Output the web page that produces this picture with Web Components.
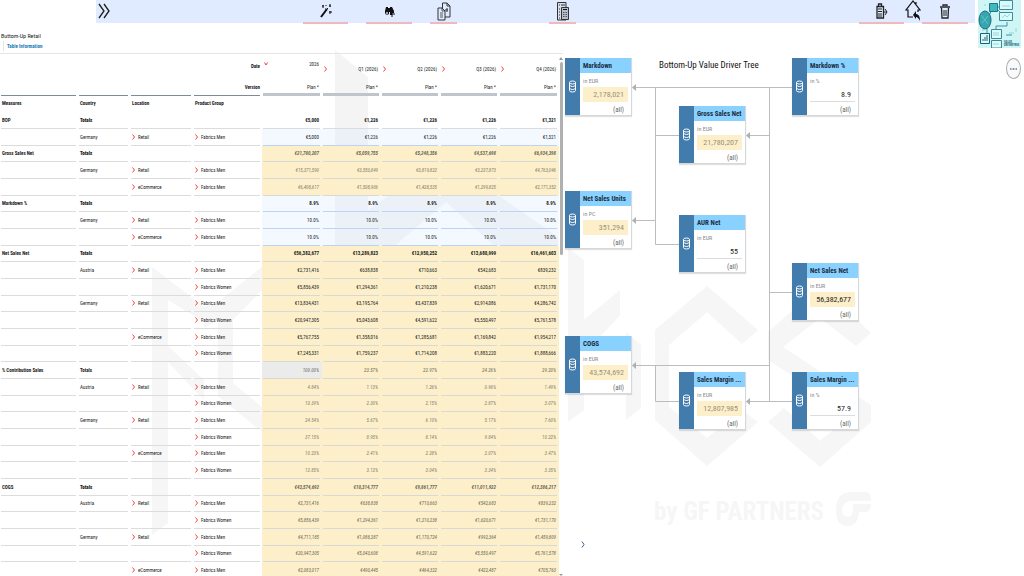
<!DOCTYPE html>
<html lang="en">
<head>
<meta charset="utf-8">
<title>Bottom-Up Value Driver Tree</title>
<style>
html,body{margin:0;height:100%}
body{font-family:"Roboto Condensed","Open Sans Condensed","Liberation Sans",sans-serif;color:#222;background:#fff;overflow:hidden}
</style>
</head>
<body>
<planning-app></planning-app>
<script>
function define(name, html, setup) {
  const t = document.createElement('template');
  t.innerHTML = html;
  customElements.define(name, class extends HTMLElement {
    constructor() {
      super();
      this.attachShadow({mode: 'open'}).append(t.content.cloneNode(true));
    }
    connectedCallback() { if (setup) setup(this, this.shadowRoot); }
  });
}

/* Faint brand artwork behind the page */
define('brand-backdrop', `
<style>
:host{display:block;position:absolute;inset:0;z-index:-1;overflow:hidden}
svg{display:block}
text{font-weight:700;font-size:25px}
</style>
<svg width="1024" height="576" viewBox="0 0 1024 576" fill="#f6f6f6" aria-hidden="true">
<path d="M152 267L204 307V400L168 362V523L152 535ZM168 300V346L204 380V322Z" fill-rule="evenodd"/>
<path d="M204 307L218 302L262 267V290L233 320V383L262 407V432L218 396V320L204 328Z"/>
<path d="M335 50L368 77V210L390 195H498L558 237V260H510L446 202L384 255H335Z" fill="#f4f4f4"/>
<path d="M568 248L584 260V320L620 290V315L597 340L584 350V410L568 422ZM626 332L641 345V408L626 420Z"/>
<path d="M707 286L758 330L742 344L707 312L669 345V407L707 438L742 410L758 422L707 466L655 420V330Z"/>
<path d="M820 286L871 333L856 346L820 318L783 347L871 405V422L820 467L768 422L784 408L820 441L852 414L768 360V332Z"/>
<text x="654" y="520">by GF PARTNERS</text>
<path d="M852 492H866Q871 492 871 501H853Q842 501 842 510Q842 517 847 517Q853 517 853 510V504H871Q871 512 865 512H859Q858 526 847 526Q836 526 836 510Q836 492 852 492Z"/>
</svg>`);

define('tool-button', `
<style>
:host{display:block;flex:none;height:24px}
button{display:flex;align-items:center;justify-content:center;box-sizing:border-box;width:100%;height:24px;margin:0;padding:0;border:0;border-bottom:2px solid transparent;background:none;color:#1c1c1c}
:host([marked]) button{border-bottom-color:#f1b9bf}
</style>
<button type="button"><slot></slot></button>`, (el, root) => {
  root.querySelector('button').setAttribute('aria-label', el.getAttribute('label'));
});

define('app-toolbar', `
<style>
:host{display:flex;height:48px;padding-left:96px;margin-bottom:-25px}
nav{flex:1;display:flex;height:23px;padding-right:7px;box-sizing:border-box;background:#e0ebff}
i{flex:1 1 0}
.a{flex-grow:191}.b{flex-grow:92}.c{flex-grow:283}
.w{width:45px}.x{width:46px}.n{width:27px}.s{width:16px}
.gap{margin-right:18px}.tight{margin-right:1px}
.thumb{flex:none;width:43px;margin:0 3px}
svg{display:block}
.thumb text{font-weight:700;font-size:3px}
</style>
<nav aria-label="Actions">
<tool-button class="s" label="Expand"><svg width="12" height="16" viewBox="0 0 12 16" fill="none" stroke="#1c1c1c" stroke-width="1.300"><path d="M1 1L6 8L1 15M6 1L11 8L6 15"/></svg></tool-button>
<i class="a"></i>
<tool-button class="w gap" label="Wizard" marked><svg width="12" height="14" viewBox="0 0 12 14"><path d="M1 13L7 5" stroke="#111" stroke-width="2"/><path d="M7 4L8 5M3 1V4M2 2H4M10 0V3M9 2H11M10 7V10M9 8H12M6 1V2M5 5H6" stroke="#111"/></svg></tool-button>
<tool-button class="x gap" label="Search" marked><svg width="11" height="11" viewBox="0 0 11 11"><path d="M2 1H4V2H6V1H8L10 5V7H8V9H6V6H5V8Q2 10 1 7V5Z" fill="#111"/><circle cx="3" cy="7" r="1" fill="#cfd8ec"/><path d="M8 6V11M6 8H11" stroke="#111"/></svg></tool-button>
<tool-button class="n" label="Copy version" marked><svg width="14" height="19" viewBox="0 0 14 19" fill="#e0ebff" stroke="#333"><path d="M5.500 1H10L13 4V15H5.500Z"/><path d="M10 1V4H13M8 8H11M10 6V10" fill="none"/><path d="M1 6H5L8 9V18H1Z"/><path d="M5 6V9H8M3 11H6M3 13H6M3 15H6" fill="none" stroke-width=".8"/></svg></tool-button>
<i class="b"></i>
<tool-button class="n" label="Calculate" marked><svg width="14" height="19" viewBox="0 0 14 19" fill="none" stroke="#333"><path d="M1.500 .5H10V18H1.500Z" fill="#d7deea"/><path d="M3 3H4M5 3H9M3 7H4M3 10H4M3 13H4M3 16H4" /><path d="M5.500 5.500H12.500V17.500H5.500Z" fill="#b7bdca"/><path d="M7 7.500H11" stroke="#111"/><path d="M7 10.500H11M7 12.500H11M7 14.500H11" stroke="#555" stroke-dasharray="1 .5"/></svg></tool-button>
<i class="c"></i>
<tool-button class="w tight" label="Export" marked><svg width="12" height="16" viewBox="0 0 12 16" fill="none" stroke="#222"><path d="M2.500 3V1H5.500V3M1 3.500H7.500V15H1Z" stroke-width="1.300"/><path d="M2 6H6M2 8.500H6M2 11H6M2 13H6" /><path d="M7 9H11M9 6L11 9L9 12"/></svg></tool-button>
<tool-button class="s tight" label="Home"><svg width="16" height="22" viewBox="0 0 16 22" fill="none" stroke="#111" stroke-width="1.200"><path d="M8 17H3V10H1L8 1L15 10H13V12M11 2V4"/><path d="M8 15L11 11V14Q15 14 15 21Q13 17 11 17V19Z" fill="#111" stroke="none"/></svg></tool-button>
<tool-button class="x" label="Delete" marked><svg width="10" height="15" viewBox="0 0 10 15" fill="none" stroke="#222"><path d="M0 3H10" stroke-width="1.500"/><path d="M3 2V1H7V2M1.500 4L2 14H8L8.500 4" stroke-width="1.300"/><path d="M4 6V12M6 6V12"/></svg></tool-button>
</nav>
<div class="thumb">
<svg width="43" height="48" viewBox="0 0 43 48">
<path d="M0 0H43V48H0Z" fill="#cff5f5"/>
<path d="M6 5H8M31 33H36M4 30H6M38 28V32" stroke="#8fd6dc"/>
<g fill="none" stroke="#3a93a2"><path d="M12 14L14 8M20 7H22M20 10L24 14M29 22V26H18V30M28 35H34M9 28V33"/></g>
<ellipse cx="7" cy="20" rx="6" ry="9" fill="#36a5ae" stroke="#1e6a80"/>
<path d="M3 15L10 24M4 23L10 16" stroke="#5fc6ca"/>
<path d="M11.500 3.500H19.500V11.500H11.500Z" fill="#3fb8bc" stroke="#23758a"/>
<g fill="#d9fbf9" stroke="#3c8a9c"><path d="M21.500 .5H34.500V9.500H21.500ZM21.500 12.500H34.500V20.500H21.500ZM13.500 29.500H23.500V38.500H13.500ZM13.500 40.500H23.500V48H13.500Z"/><path d="M2.500 33.500H11.500V43.500H2.500Z" stroke="#1e5f78"/></g>
<path d="M24 6H32M24 18L27 15L29 17L32 14M15 33H21M15 35H21M15 44H21" stroke="#9bd5da" fill="none"/>
<path d="M5 41V39M7 41V37M9 41V35" stroke="#1e5f78"/>
<text x="26" y="43" fill="#1e6a80">VALUE</text><text x="26" y="46" fill="#1e6a80">DRIVERTREE</text>
</svg>
</div>`);

const F = ['Fabrics Men', 'Fabrics Women'];
/* measure, country, location, product group, row style, values */
const ROWS = [
 ['BOP','Totals','','','plain bold','€5,000 €1,226 €1,226 €1,226 €1,321'],
 ['','Germany','Retail',F[0],'blue','€5,000 €1,226 €1,226 €1,226 €1,321'],
 ['Gross Sales Net','Totals','','','calc bold','€21,780,207 €5,059,755 €5,248,356 €4,537,698 €6,934,398'],
 ['','Germany','Retail',F[0],'calc','€15,371,590 €3,550,849 €3,819,822 €3,237,873 €4,763,046'],
 ['','','eCommerce',F[0],'calc','€6,408,617 €1,508,906 €1,428,535 €1,299,825 €2,171,352'],
 ['Markdown %','Totals','','','blue bold','8.9% 8.9% 8.9% 8.9% 8.9%'],
 ['','Germany','Retail',F[0],'blue','10.0% 10.0% 10.0% 10.0% 10.0%'],
 ['','','eCommerce',F[0],'blue','10.0% 10.0% 10.0% 10.0% 10.0%'],
 ['Net Sales Net','Totals','','','open bold','€56,382,677 €13,289,823 €12,950,252 €13,680,999 €16,461,603'],
 ['','Austria','Retail',F[0],'open','€2,731,416 €638,838 €710,663 €542,683 €839,232'],
 ['','','',F[1],'open','€5,856,439 €1,294,361 €1,210,238 €1,620,671 €1,731,170'],
 ['','Germany','Retail',F[0],'open','€13,834,431 €3,195,764 €3,437,839 €2,914,086 €4,286,742'],
 ['','','',F[1],'open','€20,947,305 €5,043,608 €4,591,622 €5,550,497 €5,761,578'],
 ['','','eCommerce',F[0],'open','€5,767,755 €1,358,016 €1,285,681 €1,169,842 €1,954,217'],
 ['','','',F[1],'open','€7,245,331 €1,759,237 €1,714,208 €1,883,220 €1,888,666'],
 ['% Contribution Sales','Totals','','','calc dark share','100.00% 23.57% 22.97% 24.26% 29.20%'],
 ['','Austria','Retail',F[0],'calc','4.84% 1.13% 1.26% 0.96% 1.49%'],
 ['','','',F[1],'calc','10.39% 2.30% 2.15% 2.87% 3.07%'],
 ['','Germany','Retail',F[0],'calc','24.54% 5.67% 6.10% 5.17% 7.60%'],
 ['','','',F[1],'calc','37.15% 8.95% 8.14% 9.84% 10.22%'],
 ['','','eCommerce',F[0],'calc','10.23% 2.41% 2.28% 2.07% 3.47%'],
 ['','','',F[1],'calc','12.85% 3.12% 3.04% 3.34% 3.35%'],
 ['COGS','Totals','','','calc bold','€43,574,692 €10,314,777 €9,861,777 €11,011,922 €12,386,217'],
 ['','Austria','Retail',F[0],'calc dark','€2,731,416 €638,838 €710,663 €542,683 €839,232'],
 ['','','',F[1],'calc dark','€5,856,439 €1,294,361 €1,210,238 €1,620,671 €1,731,170'],
 ['','Germany','Retail',F[0],'calc dark','€4,711,185 €1,088,287 €1,170,724 €992,364 €1,459,809'],
 ['','','',F[1],'calc dark','€20,947,305 €5,043,608 €4,591,622 €5,550,497 €5,761,578'],
 ['','','eCommerce',F[0],'calc dark','€2,083,017 €490,445 €464,322 €422,487 €705,763']
];
const CHEV = '<svg class="chev" width="3" height="6" viewBox="0 0 3 6" aria-hidden="true"><path d="M.5 .5L2.500 3L.5 5.500" fill="none" stroke="#f5403f"/></svg>';
const DOWN = '<svg class="chev" width="4" height="4" viewBox="0 0 4 4" aria-hidden="true"><path d="M.5 .5L2 3L3.500 .5" fill="none" stroke="#f5403f"/></svg>';

define('retail-table', `
<style>
:host{display:flex;flex-direction:column;min-width:0;overflow:hidden}
header{flex:none;height:22px;padding-top:8px;border-bottom:1px solid #e6e6e6}
h1{margin:0 1px;font-size:6px;line-height:10px;font-weight:400;color:#222}
a{display:block;width:max-content;margin-left:3px;padding-left:3px;border-left:1px solid #e4e4e4;font-size:5px;line-height:10px;font-weight:700;color:#1a7db8;text-decoration:none}
.body{flex:1;display:flex;min-height:0;overflow:hidden}
.scroll{flex:1;min-width:0;overflow:hidden}
.bar{flex:none;display:flex;flex-direction:column;align-items:center;width:4px;padding-top:3px}
.bar b{width:0;border:2px solid transparent;border-top:0;border-bottom:3px solid #999}
.bar i{width:3px;height:193px;margin-top:2px;border-radius:2px;background:#b0b0b0}
.bar b.down{margin-top:auto;border-bottom:0;border-top:2px solid #999}
table{width:100%;table-layout:fixed;border-collapse:collapse;font-size:5px;line-height:8px;white-space:nowrap}
th,td{padding:0 2px;text-align:left;vertical-align:middle;font-weight:400;
 background:linear-gradient(var(--rule,#dcdcdc),var(--rule,#dcdcdc)) no-repeat 1px 100% / calc(100% - 3px) 1px}
.num{text-align:right;padding-right:3px}
.bold>*,.strong{font-weight:700;color:#222}
.h1 th,.h3 th{background:none}
.h1 th{position:relative}
.h1 th.num{padding-top:6px}
.h1 th.year{padding:0 3px 3px 2px}
.h1 th.num .chev{position:absolute;left:2px;top:12px}
.h1 th.year .chev{top:8px}
.h2 th{--rule:#7c8a9a}
.h2 th.num{background:linear-gradient(#bfc5cc,#bfc5cc) no-repeat 1px 100% / calc(100% - 3px) 3px}
.r{text-align:right}
.h1{height:23px}.h2{height:19px}.h3{height:16px}
tbody td,.h3 th{padding-bottom:2px}
tbody tr{height:17px}
tbody tr:nth-child(3n){height:16px}
tbody .chev{margin-right:3px}
.c{display:flex;align-items:center}
.blue .num{background-color:rgba(214,236,255,.3);--rule:#bcd3f7}
.open .num,.calc .num{background-color:#fcefc9;--rule:#d6d9d6}
.calc .num{font-style:italic;color:#858070}
.calc.bold .num,.dark .num{color:#6c6858}
.share .num:nth-child(5){background-color:#ebebeb}
</style>
<header><h1>Buttom-Up Retail</h1><a href="#info">Table Information</a></header>
<div class="body"><div class="scroll"><table>
<colgroup><col style="width:78px"><col style="width:52px"><col style="width:63px"><col style="width:69px"><col style="width:60px"><col style="width:59px"><col style="width:59px"><col style="width:59px"><col style="width:60px"></colgroup>
<thead></thead><tbody></tbody></table></div>
<div class="bar"><b></b><i></i><b class="down"></b></div></div>`, (el, root) => {
  const q = ['2026','Q1 (2026)','Q2 (2026)','Q3 (2026)','Q4 (2026)'];
  root.querySelector('thead').innerHTML =
    '<tr class="h1"><th></th><th></th><th></th><th class="r strong">Date</th>' + q.map((t, i) => `<th class="num${i ? '' : ' year'}">${i ? CHEV : DOWN}${t}</th>`).join('') + '</tr>' +
    '<tr class="h2"><th></th><th></th><th></th><th class="r strong">Version</th>' + q.map(() => '<th class="num">Plan *</th>').join('') + '</tr>' +
    '<tr class="h3 bold"><th>Measures</th><th>Country</th><th>Location</th><th>Product Group</th>' + q.map(() => '<th></th>').join('') + '</tr>';
  const member = t => t ? `<span class="c">${CHEV}${t}</span>` : '';
  root.querySelector('tbody').innerHTML = ROWS.map(r =>
    `<tr class="${r[4]}"><td class="strong">${r[0]}</td><td>${r[1] === 'Totals' ? '<b>Totals</b>' : r[1]}</td><td>${member(r[2])}</td><td>${member(r[3])}</td>` +
    r[5].split(' ').map(v => `<td class="num">${v}</td>`).join('') + '</tr>').join('');
});

define('tree-node', `
<style>
:host{position:absolute;display:flex;width:67px;height:58px;box-sizing:border-box;background:#fff;border:1px solid #d4d8db;border-width:0 1px 1px 0;box-shadow:0 1px 1px rgba(0,0,0,.12)}
.side{flex:none;width:15px;display:flex;align-items:center;justify-content:center;background:#427cac}
.main{flex:1;min-width:0;display:flex;flex-direction:column}
h3{margin:0;padding:1px 0 0 3px;height:14px;line-height:15px;font-size:7px;font-weight:700;background:#89d1ff;color:#1d2d3e;white-space:nowrap}
label{padding:4px 3px 2px;font-size:6px;line-height:8px;color:#8a8a8a}
input{box-sizing:border-box;width:auto;min-width:0;height:15px;margin:0 3px;padding:0 4px;border:0;border-bottom:1px solid #dcdcdc;border-radius:0;background:none;font:inherit;font-size:8px;line-height:14px;text-align:right;color:#222}
:host([fill]) input{background:#fcefc9;border-color:#fcefc9}
:host([muted]) input{color:#9a927a}
p{margin:0;padding:4px 7px 0 0;text-align:right;font-size:7px;line-height:8px;color:#666}
</style>
<div class="side"><svg width="9" height="13" viewBox="0 0 9 13" fill="none" stroke="#fff"><ellipse cx="4.500" cy="2.500" rx="3" ry="1.500"/><path d="M1.500 2.500V10.500Q1.500 12 4.500 12Q7.500 12 7.500 10.500V2.500M1.500 5Q2 6.500 4.500 6.500Q7 6.500 7.500 5M1.500 8Q2 9.500 4.500 9.500Q7 9.500 7.500 8"/></svg></div>
<div class="main"><h3><slot></slot></h3><label for="v"></label><input id="v" type="text"><p>(all)</p></div>`, (el, root) => {
  root.querySelector('label').textContent = 'in ' + el.getAttribute('unit');
  root.querySelector('input').setAttribute('value', el.getAttribute('value'));
});

define('driver-tree', `
<style>
:host{display:block;position:relative;min-width:0}
.wires{position:absolute;left:0;top:0}
h2{position:absolute;left:96px;top:35px;margin:0;font-size:9px;line-height:14px;font-weight:400;color:#111;white-space:nowrap}
.more{position:absolute;right:3px;top:35px;width:15px;height:21px;padding:0;border:1px solid #aaa;border-radius:50%;background:#fafafa;display:flex;align-items:center;justify-content:center}
.next{position:absolute;left:17px;top:517px;width:6px;height:9px;padding:0;border:0;background:none;display:flex;align-items:center;justify-content:center}
</style>
<svg class="wires" width="300" height="420" viewBox="0 0 300 420" fill="none" stroke="#bdbdbd" aria-hidden="true">
<path d="M70 64.500H229M92.500 64V221.500H116M92.500 112.500H116M70 197.500H92M206.500 64V378M184 112.500H206M206 269.500H229M70 342.500H206M92.500 342V378.500H116M184 378.500H229"/>
<path d="M69 64.500L73 61V68ZM69 197.500L73 194V201ZM69 342.500L73 339V346ZM183 112.500L187 109V116ZM183 378.500L187 375V382Z" fill="#b0b0b0" stroke="none"/>
</svg>
<h2>Bottom-Up Value Driver Tree</h2>
<tree-node style="left:2px;top:35px" unit="EUR" value="2,178,021" fill muted>Markdown</tree-node>
<tree-node style="left:229px;top:35px" unit="%" value="8.9">Markdown %</tree-node>
<tree-node style="left:116px;top:83px" unit="EUR" value="21,780,207" fill muted>Gross Sales Net</tree-node>
<tree-node style="left:2px;top:168px" unit="PC" value="351,294" fill muted>Net Sales Units</tree-node>
<tree-node style="left:116px;top:192px" unit="EUR" value="55">AUR Net</tree-node>
<tree-node style="left:229px;top:240px" unit="EUR" value="56,382,677" fill>Net Sales Net</tree-node>
<tree-node style="left:2px;top:313px" unit="EUR" value="43,574,692" fill muted>COGS</tree-node>
<tree-node style="left:116px;top:349px" unit="EUR" value="12,807,985" fill muted>Sales Margin ...</tree-node>
<tree-node style="left:229px;top:349px" unit="%" value="57.9">Sales Margin ...</tree-node>
<button class="more" type="button" aria-label="More"><svg width="7" height="2" viewBox="0 0 7 2"><path d="M0 1H1.500M2.500 1H4.500M5.500 1H7" stroke="#5b7f9f" stroke-width="1.500"/></svg></button>
<button class="next" type="button" aria-label="Next page"><svg width="4" height="7" viewBox="0 0 4 7"><path d="M1 .5L3 3.500L1 6.500" fill="none" stroke="#35618c"/></svg></button>`);

define('planning-app', `
<style>
:host{display:flex;flex-direction:column;position:relative;z-index:0;height:100vh;overflow:hidden}
app-toolbar{flex:none;z-index:1}
main{flex:1;min-height:0;display:grid;grid-template-columns:563fr 461fr;grid-template-rows:minmax(0,1fr)}
</style>
<brand-backdrop></brand-backdrop>
<app-toolbar></app-toolbar>
<main><retail-table></retail-table><driver-tree></driver-tree></main>`);
</script>
</body>
</html>
